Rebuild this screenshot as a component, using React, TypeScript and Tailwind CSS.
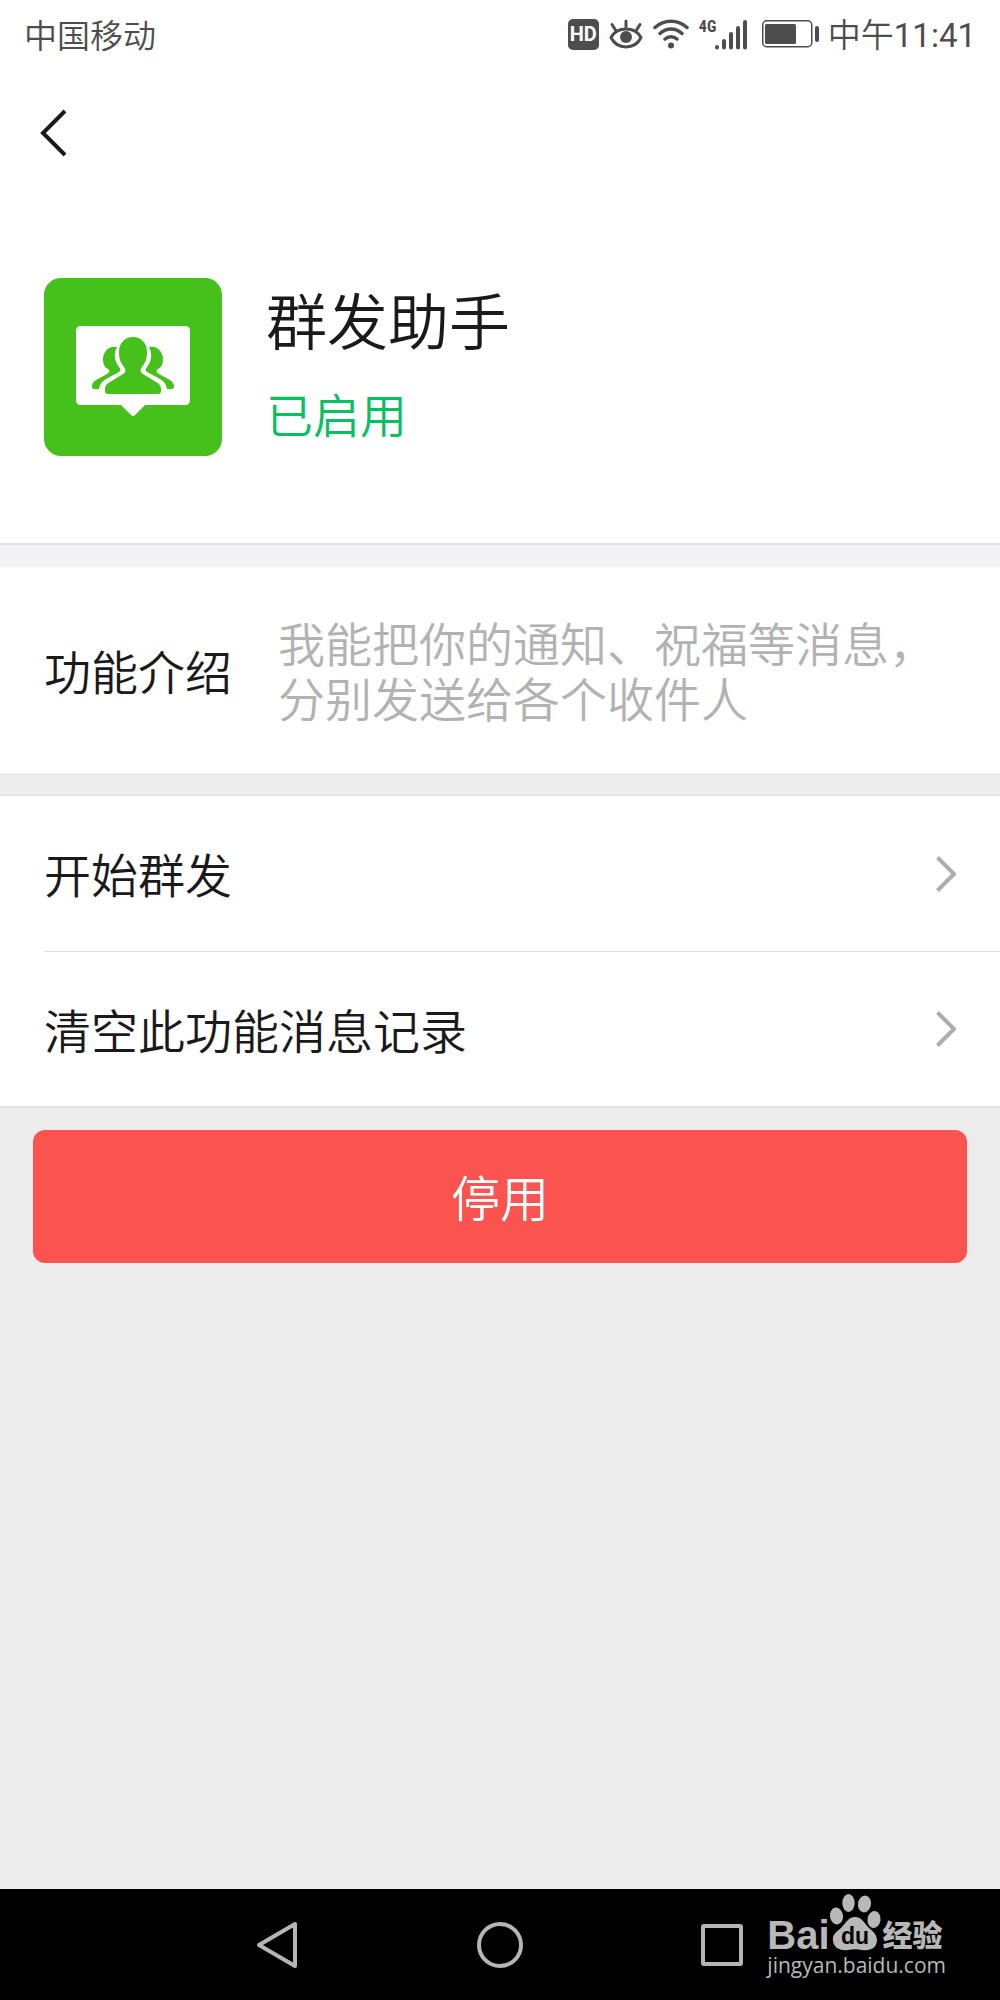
import { ReactNode } from 'react'

const actions = ['开始群发', '清空此功能消息记录']

function HdIcon() {
  return (
    <span className="flex h-[31px] w-[31px] items-center justify-center rounded-[5px] bg-[#4d4d4d] font-['Roboto',sans-serif] text-[20px] leading-none font-bold text-white">
      HD
    </span>
  )
}

function EyeIcon() {
  return (
    <svg className="h-[32px] w-[34px]" viewBox="0 0 34 32" fill="none" stroke="#4d4d4d" strokeLinecap="round">
      <path d="M2 19.500C8 8 26 8 32 19.500C26 32 8 32 2 19.500Z" strokeWidth="3" strokeLinejoin="round" />
      <path d="M17 9V3M6.500 12L3 6.500M27.500 12L31 6.500" strokeWidth="3" />
      <circle cx="17" cy="19" r="6" fill="#4d4d4d" stroke="none" />
    </svg>
  )
}

function WifiIcon() {
  return (
    <svg className="h-[30px] w-[36px]" viewBox="0 0 36 30" fill="none" stroke="#4d4d4d" strokeWidth="3.500" strokeLinecap="round">
      <path d="M2 8.500C11 0 25 0 34 8.500" />
      <path d="M7 14.500C13.500 8.500 22.500 8.500 29 14.500" />
      <path d="M12 20C15.500 17 20.500 17 24 20" />
      <circle cx="18" cy="26.500" r="3" fill="#4d4d4d" stroke="none" />
    </svg>
  )
}

function SignalIcon() {
  return (
    <span className="flex h-[31px]">
      <span className="w-[16px] font-['Roboto_Condensed','Roboto',sans-serif] text-[16px] leading-[15px] font-bold">4G</span>
      <svg className="h-[31px] w-[32px]" viewBox="0 0 32 31" stroke="#4d4d4d" strokeWidth="4" strokeLinecap="round">
        <path d="M2 28V28.500M9 22V28.500M16 15V28.500M23 9V28.500M30 3V28.500" />
      </svg>
    </span>
  )
}

function BatteryIcon() {
  return (
    <svg className="h-[28px] w-[57px]" viewBox="0 0 57 28" fill="none">
      <rect x="0.750" y="0.750" width="49" height="26" rx="4" stroke="#4d4d4d" strokeWidth="1.500" />
      <rect x="3" y="4" width="31" height="20" rx="1.500" fill="#4d4d4d" />
      <rect x="53" y="6" width="4" height="16" rx="2" fill="#4d4d4d" />
    </svg>
  )
}

function BroadcastIcon() {
  return (
    <svg className="h-[178px] w-[178px] shrink-0 rounded-[17px] bg-[#46c11b]" viewBox="0 0 178 178">
      <path d="M37 48H141Q146 48 146 53V122Q146 127 141 127H101L91 137Q89 139 87 137L77 127H37Q32 127 32 122V53Q32 48 37 48Z" fill="#fff" />
      <g fill="#46c11b">
        <path d="M89 59C81 59 75 65 75 74C75 82 77 85 80 89C82 92 82 94 79 96L66 104C61 107 61 109 61 113C61 115 62 116 64 116H114C116 116 117 115 117 113C117 109 117 107 112 104L99 96C96 94 96 92 98 89C101 85 103 82 103 74C103 65 97 59 89 59Z" />
        <path d="M73 69C65 67 59 74 59 81C59 88 62 90 64 91C66 93 66 94 63 96L52 102C48 105 48 107 48 109C48 111 50 111 52 111H55C56 107 57 104 62 101L75 94C77 93 77 91 75 89C71 84 69 76 73 69Z" />
        <path d="M105 69C113 67 119 74 119 81C119 88 116 90 114 91C112 93 112 94 115 96L126 102C130 105 130 107 130 109C130 111 128 111 126 111H123C122 107 121 104 116 101L103 94C101 93 101 91 103 89C107 84 109 76 105 69Z" />
      </g>
    </svg>
  )
}

function Chevron() {
  return (
    <svg className="h-[36px] w-[20px]" viewBox="0 0 20 36" fill="none" stroke="#adadad" strokeWidth="4" strokeLinejoin="round">
      <path d="M1.500 1.500L18 18L1.500 34.500" />
    </svg>
  )
}

function NavButton({ label, children }: { label: string; children: ReactNode }) {
  return (
    <button type="button" aria-label={label} className="flex items-center justify-center">
      <svg className="h-[48px] w-[48px]" viewBox="0 0 48 48" fill="none" stroke="#b5b5b5" strokeWidth="4" strokeLinejoin="round">
        {children}
      </svg>
    </button>
  )
}

function Watermark() {
  return (
    <div className="absolute top-[4px] right-[54px] flex flex-col items-start text-[#b8b8b8]">
      <div className="flex items-end">
        <span className="font-['Liberation_Sans',Arial,sans-serif] text-[40px] leading-[32px] font-bold">Bai</span>
        <svg className="h-[58px] w-[53px]" viewBox="2 0 53 58" fill="#b8b8b8">
          <ellipse cx="8.500" cy="23" rx="6.500" ry="8.500" transform="rotate(-8 8.500 23)" />
          <ellipse cx="20.500" cy="10" rx="6.200" ry="9" />
          <ellipse cx="36.500" cy="11" rx="6.500" ry="8.500" transform="rotate(10 36.500 11)" />
          <ellipse cx="46" cy="26.500" rx="6.500" ry="8.500" transform="rotate(8 46 26.500)" />
          <path d="M27 24C20 24 18 30 13 35C8 39 4 42 5 48C6 56 14 58 20 57C25 56 29 56 34 57C41 58 48 56 49 48C49 42 46 39 41 35C36 30 34 24 27 24Z" />
          <text x="27" y="51" textAnchor="middle" fill="#000" fontFamily="Liberation Sans, Arial, sans-serif" fontSize="23" fontWeight="700">du</text>
        </svg>
        <span className="text-[30px] leading-[36px] font-black">经验</span>
      </div>
      <span className="font-['Open_Sans',sans-serif] text-[21px] leading-[28px] font-medium">jingyan.baidu.com</span>
    </div>
  )
}

export default function App() {
  return (
    <div className="flex min-h-screen flex-col bg-[#ececec] font-['Noto_Sans_CJK_SC',sans-serif] text-[47px] leading-[55px] font-[350] text-[#1a1a1a]">
      <header className="border-b-2 border-[#e3e3e3] bg-white">
        {/* 状态栏 */}
        <div className="flex h-[68px] items-center justify-between px-[24px] text-[33px] leading-[40px] text-[#4d4d4d]">
          <span>中国移动</span>
          <div className="flex items-center gap-[10px]">
            <HdIcon />
            <EyeIcon />
            <WifiIcon />
            <SignalIcon />
            <div className="flex items-center gap-[9px] pl-[5px]">
              <BatteryIcon />
              <span>
                中午<span className="font-['Roboto',sans-serif] font-normal">11:41</span>
              </span>
            </div>
          </div>
        </div>

        <div className="flex h-[130px] items-center px-[40px]">
          <button type="button" aria-label="返回">
            <svg className="h-[48px] w-[28px]" viewBox="0 0 28 48" fill="none" stroke="#1a1a1a" strokeWidth="4">
              <path d="M25 2L3 24L25 46" />
            </svg>
          </button>
        </div>

        {/* 功能信息 */}
        <div className="flex items-center gap-[44px] px-[44px] pt-[80px] pb-[87px]">
          <BroadcastIcon />
          <div className="flex flex-col gap-[30px] pb-[12px]">
            <h1 className="text-[61px] leading-[72px]">群发助手</h1>
            <p className="text-[#07c160]">已启用</p>
          </div>
        </div>
      </header>

      <section className="mt-[22px] bg-white shadow-[0_-22px_0_#f2f1f6]">
        <div className="flex items-center gap-[46px] px-[44px] pt-[47px] pb-[49px]">
          <h2 className="shrink-0">功能介绍</h2>
          <p className="text-[#b2b2b2]">我能把你的通知、祝福等消息，分别发送给各个收件人</p>
        </div>
      </section>

      <ul className="mt-[22px] border-t border-b-2 border-[#e0e0e0] bg-white">
        {actions.map((action, i) => (
          <li key={action} className="pl-[44px]">
            <button
              type="button"
              className={`flex h-[155px] w-full items-center justify-between pr-[44px] text-left ${i > 0 ? 'border-t border-[#dedede]' : ''}`}
            >
              <span className="pb-[2px]">{action}</span>
              <Chevron />
            </button>
          </li>
        ))}
      </ul>

      <main className="flex-1 px-[33px] pt-[22px]">
        <button type="button" className="h-[133px] w-full rounded-[12px] bg-[#fb5350] pb-[2px] text-[49px] text-white">
          停用
        </button>
      </main>

      {/* 系统导航栏 */}
      <footer className="relative bg-black">
        <nav className="mx-auto grid h-[111px] w-2/3 grid-cols-3">
          <NavButton label="返回">
            <path d="M5 24L41 3V45Z" />
          </NavButton>
          <NavButton label="主屏幕">
            <circle cx="24" cy="24" r="21" />
          </NavButton>
          <NavButton label="最近任务">
            <rect x="5" y="5" width="38" height="38" rx="1" />
          </NavButton>
        </nav>
        <Watermark />
      </footer>
    </div>
  )
}
